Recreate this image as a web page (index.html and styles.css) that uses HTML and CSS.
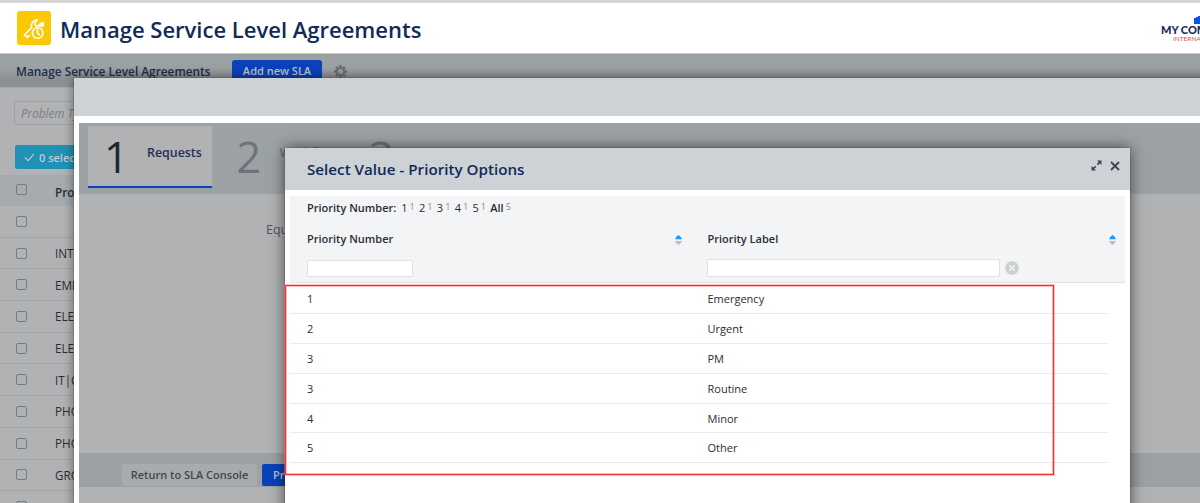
FILE: index.html
```html
<!DOCTYPE html>
<html lang="en">
<head>
<meta charset="utf-8">
<title>Manage Service Level Agreements</title>
<link rel="stylesheet" href="styles.css">
</head>
<body>
<div class="page">
  <header class="header">
    <svg class="app-icon" viewBox="0 0 34 34" width="34" height="34">
      <rect width="34" height="34" rx="3" fill="#fac905"/>
      <g fill="none" stroke="#fff" stroke-width="1.6" stroke-linejoin="round" stroke-linecap="round">
        <path d="M12.6 24.2l-2.4 2.4-.8-1.6-2.2-.8 7.4-7.6c-1-4 1.7-7.6 5.8-7.7l-2.7 3.7 1.1 2.3 2.8-.3 2.2-2.4"/>
        <circle cx="20.7" cy="22" r="5.3"/>
        <path d="M20.5 18.8v3.5l2 1.4"/>
        <path d="M26.6 11v4.2h-4.2z" fill="#fff" stroke-width="1"/>
      </g>
    </svg>
    <h1 class="title">Manage Service Level Agreements</h1>
    <div class="brand">
      <svg class="brand-mark" viewBox="0 0 12 8" width="12" height="8"><path d="M0 8V2h2V1h2V0h8v8z" fill="#0b50f0"/></svg>
      <div class="brand-name">MY COMPANY</div>
      <div class="brand-sub">INTERNATIONAL</div>
    </div>
  </header>
  <div class="toolbar">
    <span class="toolbar-title">Manage Service Level Agreements</span>
    <span class="add-button">Add new SLA</span>
    <svg class="gear" viewBox="0 0 14 14" width="13" height="13">
      <circle cx="7" cy="7" r="3.9" fill="none" stroke="#696d76" stroke-width="2.3"/>
      <path d="M7 0v2.4M7 11.6V14M0 7h2.4M11.6 7H14M2.1 2.1l1.6 1.6M10.3 10.3l1.6 1.6M2.1 11.9l1.6-1.6M10.3 3.7l1.6-1.6" stroke="#696d76" stroke-width="2.6"/>
    </svg>
  </div>
  <div class="list">
    <div class="search">Problem Type</div>
    <div class="selected"><svg viewBox="0 0 12 10" width="11" height="9"><path d="M1 5l3.5 3.5L11 1" fill="none" stroke="#bfc7ca" stroke-width="1.4"/></svg>0 selected</div>
    <div class="row row-head"><i class="check"></i><span>Problem Type</span></div>
    <div class="row"><i class="check"></i><span></span></div>
    <div class="row"><i class="check"></i><span>INTERIOR</span></div>
    <div class="row"><i class="check"></i><span>EMERGENCY</span></div>
    <div class="row"><i class="check"></i><span>ELECTRICAL</span></div>
    <div class="row"><i class="check"></i><span>ELEVATOR</span></div>
    <div class="row"><i class="check"></i><span>IT|COMPUTER</span></div>
    <div class="row"><i class="check"></i><span>PHONE</span></div>
    <div class="row"><i class="check"></i><span>PHONE</span></div>
    <div class="row"><i class="check"></i><span>GROUNDS</span></div>
    <div class="row"><i class="check"></i><span>INTERIOR</span></div>
  </div>

  <section class="wizard">
    <div class="wizard-head"></div>
    <div class="wizard-body">
      <div class="tabs">
        <div class="tab active"><b>1</b><span>Requests</span></div>
        <div class="tab"><b>2</b><span>Workflow</span></div>
        <div class="tab"><b>3</b><span></span></div>
      </div>
      <div class="form"><span>Equipment</span></div>
      <div class="wizard-foot"><span class="return">Return to SLA Console</span><span class="primary">Proceed</span></div>
    </div>
  </section>

  <section class="dialog">
    <div class="dialog-head">
      <h2>Select Value - Priority Options</h2>
      <svg class="expand" viewBox="0 0 11 11" width="11" height="11"><path d="M6 .5h4.5V5zM.5 6v4.5H5z" fill="#41454f"/><path d="M2 9l2.7-2.7M6.3 4.7L9 2" stroke="#41454f" stroke-width="1.7"/></svg>
      <svg class="close" viewBox="0 0 10 10" width="10" height="10"><path d="M1 1l8 8M9 1L1 9" stroke="#41454f" stroke-width="1.8"/></svg>
    </div>
    <div class="filters">
      <div class="index"><strong>Priority Number:</strong><span>1<small>1</small></span><span>2<small>1</small></span><span>3<small>1</small></span><span>4<small>1</small></span><span>5<small>1</small></span><strong class="all">All</strong><small>5</small></div>
      <div class="columns">
        <div class="column first"><strong>Priority Number</strong><svg viewBox="0 0 7 10" width="7" height="10"><path d="M0 4.2Q1 1.5 3.5 0 6 1.5 7 4.2z" fill="#2493f5"/><path d="M0 5.9h7Q6 8.5 3.5 10 1 8.5 0 5.9z" fill="#bbbfc3"/></svg></div>
        <div class="column"><strong>Priority Label</strong><svg viewBox="0 0 7 10" width="7" height="10"><path d="M0 4.2Q1 1.5 3.5 0 6 1.5 7 4.2z" fill="#2493f5"/><path d="M0 5.9h7Q6 8.5 3.5 10 1 8.5 0 5.9z" fill="#bbbfc3"/></svg></div>
      </div>
      <div class="inputs">
        <div class="first"><input class="input-number" aria-label="Priority Number"></div>
        <input class="input-label" aria-label="Priority Label">
        <svg class="clear" viewBox="0 0 14 14" width="14" height="14"><circle cx="7" cy="7" r="6.8" fill="#cbcfd0"/><path d="M4.3 4.3l5.4 5.4M9.7 4.3L4.3 9.7" stroke="#f3f4f6" stroke-width="1.6"/></svg>
      </div>
    </div>
    <div class="options">
      <div class="option"><span>1</span><span>Emergency</span></div>
      <div class="option"><span>2</span><span>Urgent</span></div>
      <div class="option"><span>3</span><span>PM</span></div>
      <div class="option"><span>3</span><span>Routine</span></div>
      <div class="option"><span>4</span><span>Minor</span></div>
      <div class="option"><span>5</span><span>Other</span></div>
    </div>
  </section>
  <div class="highlight"></div>
</div>
</body>
</html>
```

FILE: styles.css
```css
* { box-sizing: border-box; }
body { margin: 0; font-family: "Open Sans", sans-serif; font-size: 11px; color: #292d35; }
h1, h2 { margin: 0; font-weight: 600; color: #112a57; }
svg { flex: none; display: block; }
.page { position: relative; width: 1200px; height: 503px; overflow: hidden; background: #b1b2b4; border-top: 3px solid #d5d5d5; }

.header { display: flex; height: 51px; background: #fff; border-bottom: 1px solid #c9cbce; padding: 8px 0 0 17px; }
.title { margin-left: 9px; font-size: 22px; line-height: 36px; white-space: nowrap; }
.brand { margin: 5px -39px 0 auto; width: 78px; white-space: nowrap; }
.brand-mark { margin-left: 33px; }
.brand-name { font: 900 11px/12px Lato, sans-serif; color: #172b5b; }
.brand-sub { margin: -1px 0 0 12px; font: 6.5px/7px Lato, sans-serif; color: #ea4a40; }

.toolbar { display: flex; height: 34px; padding: 6px 0 0 16px; background: linear-gradient(#9ca1a4 40%, #8d9194 75%); border-bottom: 1px solid #a4a8ab; }
.toolbar-title { width: 216px; font-size: 11.85px; line-height: 23px; font-weight: 600; color: #1d2c4b; white-space: nowrap; }
.add-button { width: 90px; height: 24px; border-radius: 3px; background: #0b42b9; color: #bdc2cc; text-align: center; line-height: 22px; font-weight: 600; }
.gear { margin: 5px 0 0 12px; }

.list { padding-top: 13px; width: 80px; white-space: nowrap; overflow: hidden; font-size: 11.7px; }
.search { margin-left: 14px; width: 100px; height: 24px; padding-left: 6px; border: 1px solid #9fa1a4; border-radius: 2px; line-height: 22px; font-style: italic; color: #7d8087; }
.selected { display: flex; align-items: center; gap: 4px; margin: 20px 0 6px 15px; padding-left: 9px; width: 100px; height: 24px; border-radius: 2px; background: #2092b6; color: #c3cbd0; font-weight: 600; font-size: 11px; }
.row { display: flex; align-items: center; height: 31.7px; padding-left: 16px; border-bottom: 1px solid #a2a4a6; }
.check { flex: none; width: 11px; height: 11px; border: 1.5px solid #777983; border-radius: 2px; margin-right: 28px; }
.row-head { height: 31px; background: #a7abae; border: 0; font-weight: 600; }
.row-head .check { margin-top: -3px; }
.row-head span { margin-top: 3px; }

.wizard { position: absolute; left: 74px; top: 75px; width: 1140px; height: 440px; background: #fff; box-shadow: 0 0 10px rgba(0,0,0,.5), 0 0 1px rgba(0,0,0,.5); }
.wizard-head { height: 38px; background: #cdd2d6; }
.wizard-body { margin: 7px 0 0 5px; height: 395px; background: #b1b2b4; display: flex; flex-direction: column; }
.tabs { display: flex; gap: 9px; height: 71px; padding: 3px 0 0 9px; background: #9ca1a4; }
.tab { display: flex; align-items: flex-start; width: 123.5px; height: 62px; color: #6e727c; }
.tab b { width: 43px; margin: 2px 0 0 16px; font-weight: 400; font-size: 43px; line-height: 58px; }
.tab span { line-height: 54px; font-size: 12.4px; font-weight: 600; }
.active { background: #b1b2b4; border-bottom: 2px solid #0b42b9; color: #1f3055; }
.active b { color: #20262f; }
.form { flex: none; height: 259px; padding: 26px 0 0 187px; font-size: 12.5px; line-height: 19px; color: #51545c; }
.wizard-foot { display: flex; gap: 5px; height: 34px; padding: 11px 0 0 43px; background: #9ca1a4; font-weight: 600; }
.wizard-foot span { height: 22px; line-height: 22px; border-radius: 2px; }
.return { width: 135px; background: #a7abae; color: #434750; text-align: center; white-space: nowrap; }
.primary { width: 70px; padding-left: 11px; background: #0b42b9; color: #bdc2cc; }

.dialog { position: absolute; left: 285px; top: 145px; width: 845px; height: 380px; background: #fff; box-shadow: 0 0 14px rgba(0,0,0,.6), 0 0 1px rgba(0,0,0,.5); }
.dialog-head { display: flex; height: 42px; padding-left: 22px; background: #cdd2d6; }
.dialog-head h2 { flex: 1; font-size: 15.2px; line-height: 42px; }
.expand { margin: 12px 8px 0 0; }
.close { margin: 13px 10px 0 0; }
.filters { margin: 6px 5px 0; height: 87px; padding-left: 17px; background: #f3f4f6; border-bottom: 1px solid #e2e4e7; }
.filters strong { font-weight: 600; }
.index { display: flex; height: 24px; line-height: 24px; }
.index span { display: flex; width: 17.8px; }
.index strong + span { margin-left: 5px; }
.index small { margin: -1px 0 0 2px; font-size: 9px; color: #858993; }
.columns { display: flex; height: 38px; line-height: 38px; }
.column { display: flex; flex: 1; align-items: center; justify-content: space-between; padding-right: 9px; }
.column svg { margin-top: 1px; }
.first { flex: none; width: 400.4px; padding-right: 25px; }
.inputs { display: flex; padding-top: 2px; }
.inputs input { display: block; height: 17px; padding: 0 4px; border: 1px solid #e0e2e5; border-radius: 2px; background: #fff; }
.inputs .input-number { width: 106px; }
.inputs .input-label { width: 293px; height: 18px; margin-top: -1px; }
.clear { margin: 1px 0 0 5px; }
.options { margin: 1px 22px 0 5px; }
.option { display: flex; height: 29.9px; padding-left: 17px; border-bottom: 1px solid #e9eaec; line-height: 30px; }
.option span:first-child { width: 400.5px; }
.highlight { position: absolute; left: 285px; top: 282px; width: 769px; height: 190px; border: 1px solid #f53232; box-shadow: 0 0 0 .5px #f77, inset 0 0 0 .5px #f77; }
```
